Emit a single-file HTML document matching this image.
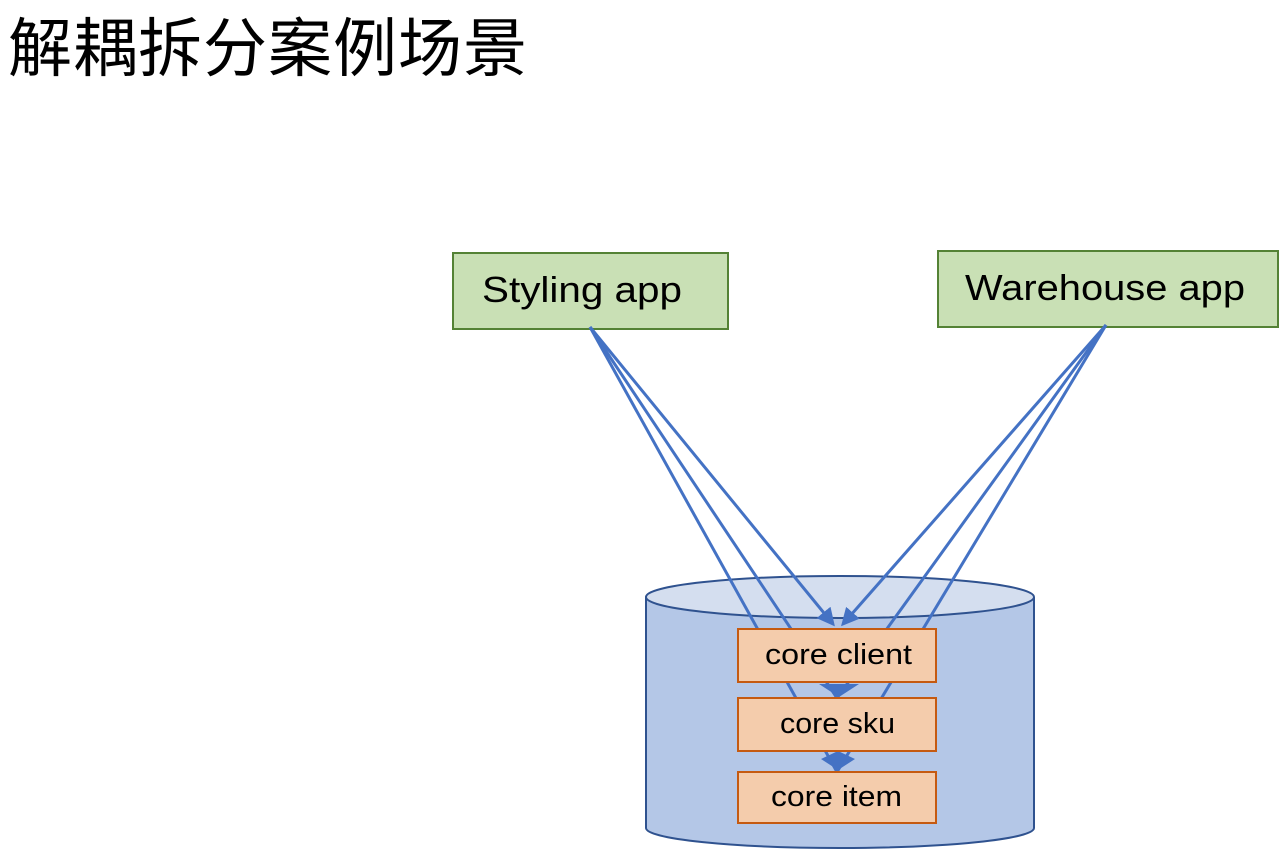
<!DOCTYPE html>
<html><head><meta charset="utf-8"><style>
body{margin:0;background:#fff;width:1288px;height:858px;overflow:hidden;position:relative;font-family:"Liberation Sans","Noto Sans CJK SC",sans-serif}
.t{position:absolute;left:8px;top:-2px;font-size:64px;font-family:"Noto Sans CJK SC",sans-serif;color:#000;font-weight:400;letter-spacing:1px;white-space:nowrap}
</style></head><body>
<div class="t">解耦拆分案例场景</div>
<svg width="1288" height="858" style="position:absolute;left:0;top:0" font-family="Liberation Sans, DejaVu Sans, sans-serif">
<defs><marker id="a" markerWidth="6" markerHeight="6" refX="5" refY="3" orient="auto" markerUnits="strokeWidth"><path d="M0,0 L6,3 L0,6 z" fill="#4472c4"/></marker></defs>
<path d="M646,597 L646,828 A194,20 0 0 0 1034,828 L1034,597" fill="#b4c7e7" stroke="#2f528f" stroke-width="2"/>
<ellipse cx="840" cy="597" rx="194" ry="21" fill="#d4deef" stroke="#2f528f" stroke-width="2"/>
<rect x="453" y="253" width="275" height="76" fill="#c9e0b5" stroke="#548235" stroke-width="2"/>
<text x="482" y="302" font-size="36" textLength="200" lengthAdjust="spacingAndGlyphs">Styling app</text>
<rect x="938" y="251" width="340" height="76" fill="#c9e0b5" stroke="#548235" stroke-width="2"/>
<text x="965" y="300" font-size="36" textLength="280" lengthAdjust="spacingAndGlyphs">Warehouse app</text>
<g stroke="#4472c4" stroke-width="3" fill="none">
<line x1="590" y1="327" x2="837" y2="772"/>
<line x1="590" y1="327" x2="837" y2="698"/>
<line x1="590" y1="327" x2="833" y2="624" marker-end="url(#a)"/>
<line x1="1106" y1="325" x2="837" y2="772"/>
<line x1="1106" y1="325" x2="837" y2="698"/>
<line x1="1106" y1="325" x2="843" y2="624" marker-end="url(#a)"/>
</g>
<path d="M819,684 L859,684 L839,697 z" fill="#4472c4"/>
<path d="M821,759 L838,751 L855,759 L838,770 z" fill="#4472c4"/>
<g fill="#f4ccac" stroke="#c55a11" stroke-width="2">
<rect x="738" y="629" width="198" height="53"/>
<rect x="738" y="698" width="198" height="53"/>
<rect x="738" y="772" width="198" height="51"/>
</g>
<g font-size="29" fill="#000" lengthAdjust="spacingAndGlyphs">
<text x="765" y="664" textLength="147" lengthAdjust="spacingAndGlyphs">core client</text>
<text x="780" y="733" textLength="115" lengthAdjust="spacingAndGlyphs">core sku</text>
<text x="771" y="806" textLength="131" lengthAdjust="spacingAndGlyphs">core item</text>
</g>
</svg>
</body></html>
